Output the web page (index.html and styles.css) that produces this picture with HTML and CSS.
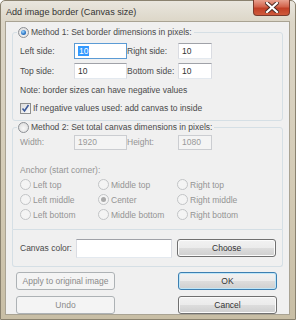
FILE: index.html
```html
<!DOCTYPE html>
<html lang="en">
<head>
  <meta charset="UTF-8">
  <title>Add image border (Canvas size)</title>
  <link rel="stylesheet" href="styles.css">
</head>
<body>

  <div class="window">
    <div class="titlebar">
      <span class="title">Add image border (Canvas size)</span>
      <span class="close">
        <svg width="14" height="11" viewBox="0 0 14 11">
          <path d="M2 1 L12 10 M12 1 L2 10" stroke="#4a2a24" stroke-width="4" stroke-linecap="square"/>
          <path d="M2 1 L12 10 M12 1 L2 10" stroke="#fff" stroke-width="2.2" stroke-linecap="square"/>
        </svg>
      </span>
    </div>

    <div class="client">
      <fieldset class="group">
        <legend><span class="radio checked"></span>Method 1: Set border dimensions in pixels:</legend>
        <div class="sides">
          <label>Left side:</label>
          <span class="box focused"><span class="sel">10</span></span>
          <label>Right side:</label>
          <span class="box">10</span>
          <label>Top side:</label>
          <span class="box">10</span>
          <label>Bottom side:</label>
          <span class="box">10</span>
        </div>
        <p class="note">Note: border sizes can have negative values</p>
        <div class="check-row">
          <span class="check">
            <svg width="9" height="9" viewBox="0 0 9 9">
              <path d="M1.5 4.5 L3.5 7 L7.5 1" fill="none" stroke="#3c5a9a" stroke-width="1.6"/>
            </svg>
          </span>
          If negative values used: add canvas to inside
        </div>
      </fieldset>

      <fieldset class="group group-2">
        <legend><span class="radio"></span>Method 2: Set total canvas dimensions in pixels:</legend>
        <div class="sides dims">
          <label>Width:</label>
          <span class="box disabled">1920</span>
          <label>Height:</label>
          <span class="box disabled">1080</span>
        </div>
        <p class="anchor-title">Anchor (start corner):</p>
        <div class="anchors">
          <span class="opt"><span class="radio off"></span>Left top</span>
          <span class="opt"><span class="radio off"></span>Middle top</span>
          <span class="opt"><span class="radio off"></span>Right top</span>
          <span class="opt"><span class="radio off"></span>Left middle</span>
          <span class="opt"><span class="radio off checked"></span>Center</span>
          <span class="opt"><span class="radio off"></span>Right middle</span>
          <span class="opt"><span class="radio off"></span>Left bottom</span>
          <span class="opt"><span class="radio off"></span>Middle bottom</span>
          <span class="opt"><span class="radio off"></span>Right bottom</span>
        </div>
      </fieldset>

      <div class="color-row">
        <label>Canvas color:</label>
        <span class="box color-box"></span>
        <span class="btn">Choose</span>
      </div>

      <div class="buttons">
        <span class="btn disabled">Apply to original image</span>
        <span class="btn default">OK</span>
        <span class="btn disabled">Undo</span>
        <span class="btn">Cancel</span>
      </div>
    </div>
  </div>

</body>
</html>
```

FILE: styles.css
```css
body {
  margin: 0;
  font-family: "Liberation Sans", Arial, sans-serif;
  font-size: 8.5px;
  color: #4a4a4a;
}

.window {
  width: 296px;
  height: 320px;
  box-sizing: border-box;
  display: flex;
  flex-direction: column;
  padding: 0 5px 4px 4px;
  border: 1px solid #8a826f;
  border-radius: 5px 5px 0 0;
  background: linear-gradient(to bottom, #e9e6de 0, #dcd6c7 21px, #d3cab4 60%, #c8bea5 100%);
}

.titlebar {
  height: 21px;
  display: flex;
  justify-content: space-between;
  align-items: flex-start;
}

.title {
  margin: 5px 0 0 1px;
  font-size: 9.1px;
  line-height: 13px;
  color: #333;
}

.close {
  width: 37px;
  height: 16px;
  margin-top: -1px;
  display: flex;
  align-items: center;
  justify-content: center;
  box-sizing: border-box;
  border: 1px solid #7a3a2c;
  border-top: none;
  border-radius: 0 0 4px 4px;
  background: linear-gradient(to bottom, #e8a08e 0, #d2634c 45%, #c13f26 55%, #cf5a3c 100%);
}

.client {
  flex: 1;
  background: #f0f0f0;
  border: 1px solid #a9a393;
  padding: 4px 6px 0 6px;
}

.group {
  margin: 0;
  padding: 0 7px 5px 7px;
  border: 1px solid #d5dfe5;
  border-radius: 3px;
}

.group legend {
  margin-left: -3px;
  padding: 0 2px 0 1px;
  line-height: 13px;
  display: flex;
  align-items: center;
  gap: 2px;
}

.radio {
  width: 11px;
  height: 11px;
  box-sizing: border-box;
  border: 1px solid #8d9095;
  border-radius: 50%;
  background: radial-gradient(circle at 50% 60%, #f8f8f8 0, #e2e2e2 70%);
  display: inline-flex;
  align-items: center;
  justify-content: center;
  flex-shrink: 0;
}

.radio.checked::after {
  content: "";
  width: 5px;
  height: 5px;
  border-radius: 50%;
  background: radial-gradient(circle at 40% 35%, #a8dcff 0, #2e79c9 55%, #174d8f 100%);
}

.radio.off {
  border-color: #c2c4c6;
  background: #f4f4f4;
}

.radio.off.checked::after {
  background: #a9a9a9;
}

.sides {
  margin-top: 4px;
  display: grid;
  grid-template-columns: 54px 53px 51px 34px;
  grid-auto-rows: 16px;
  row-gap: 4px;
  align-items: center;
}

.box {
  height: 16px;
  box-sizing: border-box;
  border: 1px solid #abadb3;
  border-top-color: #a0a2a8;
  border-left-color: #dadce2;
  border-right-color: #dadce2;
  border-bottom-color: #e3e9ef;
  background: #fff;
  padding-left: 3px;
  line-height: 14px;
  color: #333;
}

.box.focused {
  border-color: #5b9bd5;
}

.sel {
  background: #3399ff;
  color: #fff;
  padding: 0 1px;
}

.box.disabled {
  border-color: #cbcdd1;
  background: #f4f4f4;
  color: #999;
  height: 15px;
  line-height: 13px;
}

.note {
  margin: 5px 0 0;
  line-height: 12px;
}

.check-row {
  margin-top: 6px;
  display: flex;
  align-items: center;
  gap: 2px;
  line-height: 13px;
}

.check {
  width: 11px;
  height: 11px;
  box-sizing: border-box;
  border: 1px solid #8e8f8f;
  background: linear-gradient(to bottom right, #dcdcdc, #fafafa);
  display: inline-flex;
  align-items: center;
  justify-content: center;
}

.group-2 {
  padding-bottom: 7px;
  color: #949494;
  border-radius: 3px 3px 0 0;
}

.group-2 legend {
  color: #4a4a4a;
}

.dims {
  margin-top: 0;
}

.anchor-title {
  margin: 14px 0 0;
  line-height: 12px;
}

.anchors {
  margin-top: 1px;
  display: grid;
  grid-template-columns: 78px 79px 1fr;
  grid-auto-rows: 15px;
  align-items: center;
}

.opt {
  display: flex;
  align-items: center;
  gap: 2px;
}

.color-row {
  height: 36px;
  display: flex;
  align-items: center;
  padding: 0 6px 0 7px;
  border: 1px solid #d5dfe5;
  border-top: none;
  border-radius: 0 0 3px 3px;
}

.color-row label {
  width: 56px;
}

.color-box {
  width: 97px;
  height: 19px;
  margin-top: 1px;
}

.btn {
  width: 99px;
  height: 18px;
  box-sizing: border-box;
  display: flex;
  align-items: center;
  justify-content: center;
  border: 1px solid #707070;
  border-radius: 3px;
  background: linear-gradient(to bottom, #f2f2f2 0, #ebebeb 50%, #dddddd 50%, #cfcfcf 100%);
  box-shadow: inset 0 0 0 1px #fbfbfb;
  color: #333;
}

.color-row .btn {
  margin-left: 5px;
}

.btn.disabled {
  border-color: #adb2b5;
  background: #f4f4f4;
  box-shadow: none;
  color: #8a8a8a;
}

.btn.default {
  border-color: #3c7fb1;
  box-shadow: inset 0 0 0 1px #bfe6f8;
}

.buttons {
  margin-top: 5px;
  padding-left: 4px;
  display: grid;
  grid-template-columns: 99px 99px;
  column-gap: 63px;
  row-gap: 6px;
}
```
